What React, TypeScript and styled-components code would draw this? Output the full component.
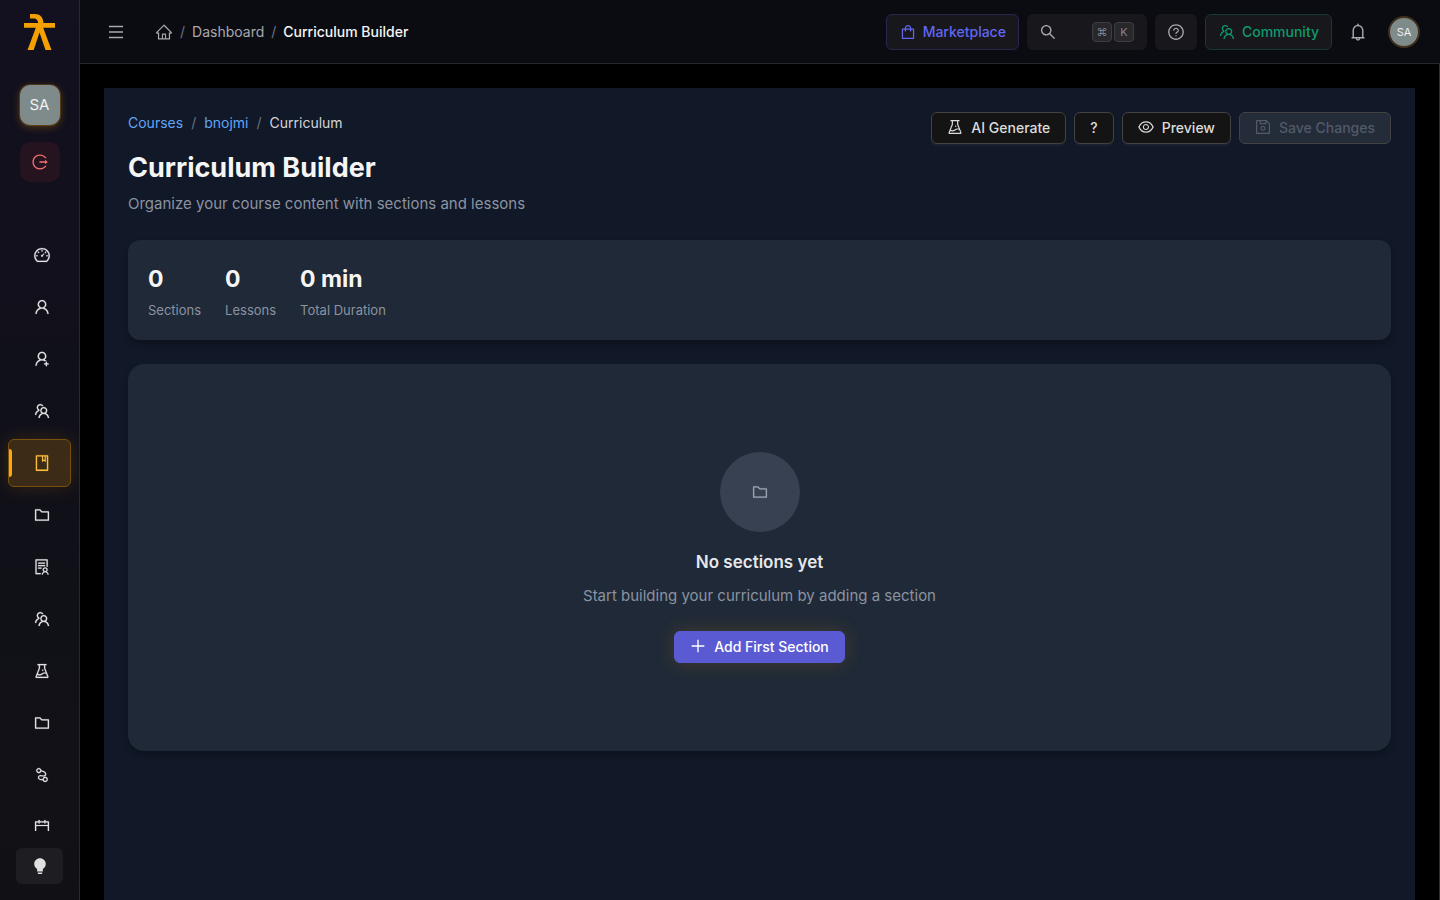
import React from 'react';
import styled, { createGlobalStyle, css } from 'styled-components';
import {
  AiFillBulb,
  AiOutlineBell,
  AiOutlineBook,
  AiOutlineCalendar,
  AiOutlineDashboard,
  AiOutlineExperiment,
  AiOutlineEye,
  AiOutlineFolder,
  AiOutlineHome,
  AiOutlineLogout,
  AiOutlineMenu,
  AiOutlineNodeIndex,
  AiOutlinePlus,
  AiOutlineQuestionCircle,
  AiOutlineSave,
  AiOutlineSearch,
  AiOutlineShopping,
  AiOutlineSolution,
  AiOutlineTeam,
  AiOutlineUser,
  AiOutlineUserAdd,
} from 'react-icons/ai';

const GlobalStyle = createGlobalStyle`
  *, *::before, *::after { box-sizing: border-box; }
  body {
    margin: 0;
    background: #000;
    color: #e0e0e0;
    font-family: Inter, "Liberation Sans", sans-serif;
    font-size: 14px;
    line-height: 20px;
  }
  button, input { font: inherit; color: inherit; }
  button { cursor: pointer; }
  a { text-decoration: none; }
  svg { display: block; flex: none; }
`;

const Shell = styled.div`
  display: grid;
  grid-template-columns: 80px 1fr;
  height: 100vh;
`;

const Sidebar = styled.aside`
  display: flex;
  flex-direction: column;
  align-items: center;
  min-height: 0;
  padding: 14px 8px 16px;
  border-right: 1px solid #28282f;
  background: linear-gradient(180deg, #13101f 0%, #10101a 45%, #111115 100%);
`;

const LogoLink = styled.a`
  display: block;
`;

const UserTile = styled.button`
  width: 40px;
  height: 40px;
  margin-top: 35px;
  padding: 0;
  border: 0;
  border-radius: 10px;
  background: #7f8a8b;
  color: #f0f0f0;
  font-size: 15px;
  box-shadow: 0 0 0 1px rgba(245, 158, 11, 0.2), 0 2px 8px rgba(245, 158, 11, 0.3);
`;

const LogoutButton = styled.button`
  display: grid;
  place-items: center;
  width: 40px;
  height: 40px;
  margin-top: 17px;
  padding: 0;
  border: 0;
  border-radius: 10px;
  background: #251320;
  color: #f87171;
`;

const Nav = styled.nav`
  display: flex;
  flex: 1;
  flex-direction: column;
  gap: 4px;
  align-self: stretch;
  min-height: 0;
  margin: 25px -8px 17px;
  padding: 24px 8px 0;
  overflow: hidden;
`;

const NavItem = styled.a<{ $active?: boolean }>`
  position: relative;
  display: flex;
  flex: none;
  align-items: center;
  justify-content: center;
  height: 48px;
  padding-left: 5px;
  border: 1px solid transparent;
  border-radius: 6px;
  color: #e2e2e4;

  svg {
    stroke-width: 10px;
  }
  ${({ $active }) =>
    $active &&
    css`
      border-color: #7a500f;
      background: #3b2b17;
      color: #fbbf3c;
      box-shadow: 0 0 20px rgba(245, 158, 11, 0.16);

      &::before {
        content: '';
        position: absolute;
        left: 0;
        top: 9px;
        width: 3px;
        height: 28px;
        border-radius: 0 3px 3px 0;
        background: #ffa60a;
      }
    `}
`;

const ThemeButton = styled.button`
  display: grid;
  place-items: center;
  width: 47px;
  height: 36px;
  padding: 0;
  border: 0;
  border-radius: 6px;
  background: #1d1d22;
  color: #e0e0e0;
`;

const Column = styled.div`
  display: flex;
  flex-direction: column;
  min-width: 0;
  min-height: 0;
`;

const TopBar = styled.header`
  display: flex;
  align-items: center;
  justify-content: space-between;
  height: 64px;
  flex: none;
  padding: 0 20px 0 27px;
  border-bottom: 1px solid #27272b;
  background: #0b0c12;
  color: #a9a9ad;
`;

const Group = styled.div<{ $gap: number }>`
  display: flex;
  align-items: center;
  gap: ${({ $gap }) => $gap}px;
`;

const IconButton = styled.button`
  display: grid;
  place-items: center;
  padding: 0;
  border: 0;
  background: transparent;
`;

const BellButton = styled(IconButton)`
  width: 36px;
  height: 36px;
`;

const Trail = styled.ol<{ $gap: number }>`
  display: flex;
  align-items: center;
  gap: ${({ $gap }) => $gap}px;
  margin: 0;
  padding: 0;
  list-style: none;
  line-height: 22px;
`;

const Slash = styled.li`
  color: #6b7280;
`;

const TrailLink = styled.a<{ $blue?: boolean }>`
  color: ${({ $blue }) => ($blue ? '#60a5fa' : '#a9a9ad')};
`;

const Current = styled.span<{ $strong?: boolean }>`
  color: ${({ $strong }) => ($strong ? '#f5f5f5' : '#d1d5db')};
  font-weight: ${({ $strong }) => ($strong ? 500 : 400)};
`;

const BarButton = styled.button<{ $tone?: 'violet' | 'green' }>`
  display: flex;
  align-items: center;
  gap: 6px;
  height: 36px;
  padding: 0 12px;
  border: 0;
  border-radius: 6px;
  background: #17171c;
  ${({ $tone }) =>
    $tone === 'violet' &&
    css`
      border: 1px solid #28264f;
      color: #6366f1;
      font-weight: 500;
    `}
  ${({ $tone }) =>
    $tone === 'green' &&
    css`
      border: 1px solid #153a33;
      color: #0f9a6c;
      font-weight: 500;
    `}
`;

const SearchBox = styled.label`
  display: flex;
  align-items: center;
  width: 120px;
  height: 36px;
  padding: 0 13px 0 12px;
  border-radius: 6px;
  background: #17171c;
`;

const SearchInput = styled.input`
  flex: 1;
  min-width: 0;
  width: 0;
  padding: 0;
  border: 0;
  outline: 0;
  background: transparent;
`;

const Key = styled.kbd`
  display: grid;
  place-items: center;
  width: 20px;
  height: 20px;
  margin-left: 2px;
  border: 1px solid #3d3d42;
  border-radius: 4px;
  background: #27272c;
  color: #85858a;
  font-family: Inter, "DejaVu Sans", sans-serif;
  font-size: 11px;
  line-height: 16px;
`;

const RoundAvatar = styled.button`
  width: 32px;
  height: 32px;
  padding: 0;
  border: 2px solid #40301b;
  border-radius: 50%;
  background: #7f8a8b;
  color: #f0f0f0;
  font-size: 11px;
  line-height: 16px;
`;

const Main = styled.main`
  display: flex;
  flex: 1;
  flex-direction: column;
  min-height: 0;
  padding: 24px 24px 0;
  border-right: 1px solid #303033;
  overflow: hidden;
`;

const Page = styled.div`
  flex: 1 0 auto;
  padding: 24px;
  background: #111827;
`;

const PageHeader = styled.div`
  display: flex;
  align-items: flex-start;
  justify-content: space-between;
`;

const Title = styled.h1`
  margin: 16px 0 6px;
  color: #f5f5f5;
  font-size: 27px;
  font-weight: 700;
  line-height: 36px;
`;

const Lead = styled.p`
  margin: 0;
  color: #8b93a1;
  font-size: 15px;
  line-height: 24px;
`;

const Button = styled.button<{ $kind?: 'primary' }>`
  display: flex;
  align-items: center;
  gap: 8px;
  height: 32px;
  padding: 0 15px;
  border: 1px solid #424242;
  border-radius: 6px;
  background: #141414;
  color: #dcdcdc;
  font-weight: 500;
  box-shadow: 0 2px 0 rgba(255, 255, 255, 0.04);

  svg {
    margin: -1px -1px 1px;
  }

  &:disabled {
    background: #242c3a;
    color: #525a67;
    box-shadow: none;
    cursor: default;
  }
  ${({ $kind }) =>
    $kind === 'primary' &&
    css`
      border-color: #5a5bd3;
      background: #5a5bd3;
      color: #fff;
      box-shadow: 0 0 20px rgba(245, 158, 11, 0.18);
    `}
`;

const StatsCard = styled.dl`
  display: flex;
  gap: 24px;
  margin: 24px 0 0;
  padding: 20px;
  border-radius: 12px;
  background: #1f2937;
  box-shadow: 0 4px 6px rgba(0, 0, 0, 0.25);
`;

const Stat = styled.div`
  display: flex;
  flex-direction: column-reverse;
  justify-content: flex-end;
  gap: 2px;
`;

const StatLabel = styled.dt`
  color: #8b93a1;
  font-size: 13px;
  line-height: 20px;
`;

const StatValue = styled.dd`
  margin: 0;
  color: #f5f5f5;
  font-size: 23px;
  font-weight: 700;
  line-height: 38px;
`;

const EmptyCard = styled.section`
  display: flex;
  flex-direction: column;
  align-items: center;
  margin-top: 24px;
  padding: 88px 24px;
  border-radius: 16px;
  background: #1f2937;
  box-shadow: 0 4px 6px rgba(0, 0, 0, 0.25);
`;

const EmptyIcon = styled.div`
  display: grid;
  place-items: center;
  width: 80px;
  height: 80px;
  border-radius: 50%;
  background: #374151;
  color: #9ca3af;

  svg {
    stroke-width: 10px;
  }
`;

const EmptyTitle = styled.h2`
  margin: 16px 0 8px;
  color: #e5e7eb;
  font-size: 17px;
  font-weight: 600;
  line-height: 28px;
`;

const EmptyText = styled.p`
  margin: 0 0 23px;
  color: #8b93a1;
  font-size: 15px;
  line-height: 24px;
`;

const NAV = [
  { label: 'Overview', Icon: AiOutlineDashboard },
  { label: 'Users', Icon: AiOutlineUser },
  { label: 'Add user', Icon: AiOutlineUserAdd },
  { label: 'Groups', Icon: AiOutlineTeam },
  { label: 'Courses', Icon: AiOutlineBook, active: true },
  { label: 'Files', Icon: AiOutlineFolder },
  { label: 'Applications', Icon: AiOutlineSolution },
  { label: 'Teams', Icon: AiOutlineTeam },
  { label: 'Labs', Icon: AiOutlineExperiment },
  { label: 'Library', Icon: AiOutlineFolder },
  { label: 'Paths', Icon: AiOutlineNodeIndex },
  { label: 'Calendar', Icon: AiOutlineCalendar },
];

const STATS = [
  { label: 'Sections', value: '0' },
  { label: 'Lessons', value: '0' },
  { label: 'Total Duration', value: '0 min' },
];

function Logo() {
  return (
    <svg width="31" height="36" viewBox="0 0 31 36" fill="#f5a002" aria-hidden="true">
      <path d="M6 0h5c5 0 8 3 8.500 9H31v4.700H19.200L27.500 36h-6L15.500 18.500 9.700 36H3.500L11.800 13.700H0V9h14.200c-.5-3-1.700-4.500-4.200-4.500H6z" />
    </svg>
  );
}

export default function App() {
  return (
    <>
      <GlobalStyle />
      <Shell>
        <Sidebar>
          <LogoLink href="#" aria-label="Home">
            <Logo />
          </LogoLink>
          <UserTile type="button">SA</UserTile>
          <LogoutButton type="button" aria-label="Log out">
            <AiOutlineLogout size={18} />
          </LogoutButton>
          <Nav aria-label="Main">
            {NAV.map(({ label, Icon, active }) => (
              <NavItem key={label} href="#" aria-label={label} $active={active}>
                <Icon size={18} />
              </NavItem>
            ))}
          </Nav>
          <ThemeButton type="button" aria-label="Toggle theme">
            <AiFillBulb size={18} />
          </ThemeButton>
        </Sidebar>

        <Column>
          <TopBar>
            <Group $gap={30}>
              <IconButton type="button" aria-label="Toggle menu">
                <AiOutlineMenu size={18} />
              </IconButton>
              <nav aria-label="Breadcrumb">
                <Trail $gap={7}>
                  <li>
                    <TrailLink href="#" aria-label="Home">
                      <AiOutlineHome size={18} />
                    </TrailLink>
                  </li>
                  <Slash aria-hidden="true">/</Slash>
                  <li>
                    <TrailLink href="#">Dashboard</TrailLink>
                  </li>
                  <Slash aria-hidden="true">/</Slash>
                  <li>
                    <Current $strong>Curriculum Builder</Current>
                  </li>
                </Trail>
              </nav>
            </Group>
            <Group $gap={12}>
              <Group $gap={8}>
                <BarButton type="button" $tone="violet">
                  <AiOutlineShopping size={18} />
                  Marketplace
                </BarButton>
                <SearchBox>
                  <AiOutlineSearch size={18} />
                  <SearchInput type="text" aria-label="Search" />
                  <Key>⌘</Key>
                  <Key>K</Key>
                </SearchBox>
                <BarButton type="button" aria-label="Help">
                  <AiOutlineQuestionCircle size={18} />
                </BarButton>
                <BarButton type="button" $tone="green">
                  <AiOutlineTeam size={18} />
                  Community
                </BarButton>
                <BellButton type="button" aria-label="Notifications">
                  <AiOutlineBell size={20} />
                </BellButton>
              </Group>
              <RoundAvatar type="button">SA</RoundAvatar>
            </Group>
          </TopBar>

          <Main>
            <Page>
              <PageHeader>
                <div>
                  <nav aria-label="Course">
                    <Trail $gap={8}>
                      <li>
                        <TrailLink $blue href="#">Courses</TrailLink>
                      </li>
                      <Slash aria-hidden="true">/</Slash>
                      <li>
                        <TrailLink $blue href="#">bnojmi</TrailLink>
                      </li>
                      <Slash aria-hidden="true">/</Slash>
                      <li>
                        <Current>Curriculum</Current>
                      </li>
                    </Trail>
                  </nav>
                  <Title>Curriculum Builder</Title>
                  <Lead>Organize your course content with sections and lessons</Lead>
                </div>
                <Group $gap={8}>
                  <Button type="button">
                    <AiOutlineExperiment size={18} />
                    AI Generate
                  </Button>
                  <Button type="button">?</Button>
                  <Button type="button">
                    <AiOutlineEye size={18} />
                    Preview
                  </Button>
                  <Button type="button" disabled>
                    <AiOutlineSave size={18} />
                    Save Changes
                  </Button>
                </Group>
              </PageHeader>

              <StatsCard>
                {STATS.map(({ label, value }) => (
                  <Stat key={label}>
                    <StatLabel>{label}</StatLabel>
                    <StatValue>{value}</StatValue>
                  </Stat>
                ))}
              </StatsCard>

              <EmptyCard>
                <EmptyIcon>
                  <AiOutlineFolder size={18} />
                </EmptyIcon>
                <EmptyTitle>No sections yet</EmptyTitle>
                <EmptyText>Start building your curriculum by adding a section</EmptyText>
                <Button type="button" $kind="primary">
                  <AiOutlinePlus size={18} />
                  Add First Section
                </Button>
              </EmptyCard>
            </Page>
          </Main>
        </Column>
      </Shell>
    </>
  );
}
